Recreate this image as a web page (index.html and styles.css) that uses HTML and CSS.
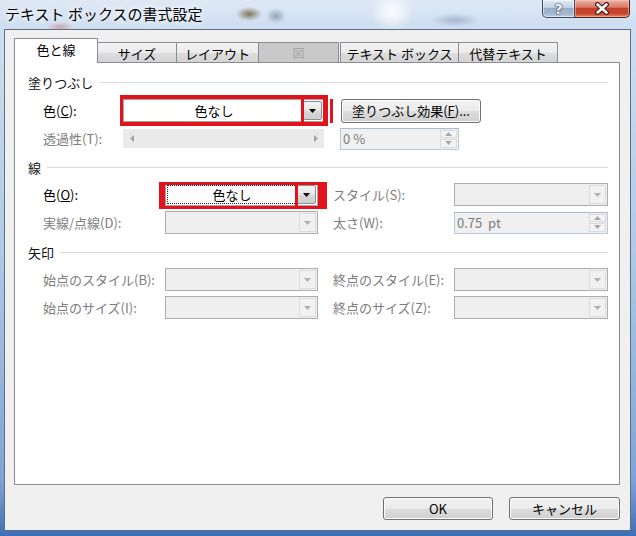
FILE: index.html
```html
<!DOCTYPE html>
<html lang="ja">
<head>
<meta charset="utf-8">
<title>テキスト ボックスの書式設定</title>
<link rel="stylesheet" href="styles.css">
</head>
<body>
<div class="window">
  <header class="titlebar">
    <div class="title">テキスト ボックスの書式設定</div>
    <div class="caption-buttons">
      <div class="cap-btn help"><span>?</span></div>
      <div class="cap-btn close">
        <svg width="16" height="13" viewBox="0 0 16 13"><path d="M3.5 2.5L12.5 10.5M12.5 2.5L3.5 10.5" stroke="#4a1c14" stroke-width="5" stroke-linecap="round"/><path d="M3.5 2.5L12.5 10.5M12.5 2.5L3.5 10.5" stroke="#fff" stroke-width="2.6" stroke-linecap="round"/></svg>
      </div>
    </div>
  </header>
  <div class="client">
    <nav class="tabs">
      <div class="tab active t1">色と線</div>
      <div class="tab t2">サイズ</div>
      <div class="tab t3">レイアウト</div>
      <div class="tab disabled t4">図</div>
      <div class="tab t5">テキスト ボックス</div>
      <div class="tab t6">代替テキスト</div>
    </nav>
    <main class="panel">
      <section class="group g1">
        <div class="group-title">塗りつぶし</div>
        <div class="grid grid-fill">
          <div class="lbl">色(<u>C</u>):</div>
          <div class="combo">
            <div class="combo-field">色なし</div>
            <div class="combo-btn"><svg width="7" height="4" viewBox="0 0 7 4"><path d="M0 0H7L3.5 4Z" fill="#000"/></svg></div>
            <span class="mark m1-outer"></span>
            <span class="mark m1-btn"></span>
            <span class="mark m1-line"></span>
          </div>
          <div class="btn btn-effect">塗りつぶし効果(<u>F</u>)...</div>

          <div class="lbl dis">透過性(T):</div>
          <div class="slider">
            <span class="sl-arrow"><svg width="4" height="7" viewBox="0 0 4 7"><path d="M4 0V7L0 3.5Z" fill="#a2a2a2"/></svg></span>
            <span class="sl-arrow"><svg width="4" height="7" viewBox="0 0 4 7"><path d="M0 0V7L4 3.5Z" fill="#a2a2a2"/></svg></span>
          </div>
          <div class="spin spin-pct">
            <div class="spin-field">0 %</div>
            <div class="spin-btns">
              <span class="sp"><svg width="7" height="4" viewBox="0 0 7 4"><path d="M0 4H7L3.5 0Z" fill="#a8a8a8"/></svg></span>
              <span class="sp"><svg width="7" height="4" viewBox="0 0 7 4"><path d="M0 0H7L3.5 4Z" fill="#a8a8a8"/></svg></span>
            </div>
          </div>
        </div>
      </section>

      <section class="group g2">
        <div class="group-title">線</div>
        <div class="grid grid-two">
          <div class="lbl">色(<u>O</u>):</div>
          <div class="combo">
            <div class="combo-field focus">色なし</div>
            <div class="combo-btn"><svg width="7" height="4" viewBox="0 0 7 4"><path d="M0 0H7L3.5 4Z" fill="#000"/></svg></div>
            <span class="mark m2-outer"></span>
            <span class="mark m2-btn"></span>
          </div>
          <div class="lbl dis lbl2">スタイル(S):</div>
          <div class="combo dis">
            <div class="combo-field"></div>
            <div class="combo-btn"><svg width="7" height="4" viewBox="0 0 7 4"><path d="M0 0H7L3.5 4Z" fill="#b0b0b0"/></svg></div>
          </div>

          <div class="lbl dis">実線/点線(D):</div>
          <div class="combo dis">
            <div class="combo-field"></div>
            <div class="combo-btn"><svg width="7" height="4" viewBox="0 0 7 4"><path d="M0 0H7L3.5 4Z" fill="#b0b0b0"/></svg></div>
          </div>
          <div class="lbl dis lbl2">太さ(W):</div>
          <div class="spin">
            <div class="spin-field">0.75&nbsp; pt</div>
            <div class="spin-btns">
              <span class="sp"><svg width="7" height="4" viewBox="0 0 7 4"><path d="M0 4H7L3.5 0Z" fill="#a8a8a8"/></svg></span>
              <span class="sp"><svg width="7" height="4" viewBox="0 0 7 4"><path d="M0 0H7L3.5 4Z" fill="#a8a8a8"/></svg></span>
            </div>
          </div>
        </div>
      </section>

      <section class="group g3">
        <div class="group-title">矢印</div>
        <div class="grid grid-two">
          <div class="lbl dis">始点のスタイル(B):</div>
          <div class="combo dis">
            <div class="combo-field"></div>
            <div class="combo-btn"><svg width="7" height="4" viewBox="0 0 7 4"><path d="M0 0H7L3.5 4Z" fill="#b0b0b0"/></svg></div>
          </div>
          <div class="lbl dis lbl2">終点のスタイル(E):</div>
          <div class="combo dis">
            <div class="combo-field"></div>
            <div class="combo-btn"><svg width="7" height="4" viewBox="0 0 7 4"><path d="M0 0H7L3.5 4Z" fill="#b0b0b0"/></svg></div>
          </div>

          <div class="lbl dis">始点のサイズ(I):</div>
          <div class="combo dis">
            <div class="combo-field"></div>
            <div class="combo-btn"><svg width="7" height="4" viewBox="0 0 7 4"><path d="M0 0H7L3.5 4Z" fill="#b0b0b0"/></svg></div>
          </div>
          <div class="lbl dis lbl2">終点のサイズ(Z):</div>
          <div class="combo dis">
            <div class="combo-field"></div>
            <div class="combo-btn"><svg width="7" height="4" viewBox="0 0 7 4"><path d="M0 0H7L3.5 4Z" fill="#b0b0b0"/></svg></div>
          </div>
        </div>
      </section>
    </main>
    <footer class="footer">
      <div class="btn btn-ok">OK</div>
      <div class="btn btn-cancel">キャンセル</div>
    </footer>
  </div>
</div>
</body>
</html>
```

FILE: styles.css
```css
* { box-sizing: border-box; margin: 0; padding: 0; }
html, body { width: 636px; height: 536px; overflow: hidden; }
body {
  font-family: "Noto Sans CJK JP", "Noto Sans", sans-serif;
  font-size: 13px;
  color: #000;
  background:
    radial-gradient(ellipse 13px 7px at 249px 14px, rgba(105, 80, 40, .75), rgba(105, 80, 40, 0)),
    radial-gradient(ellipse 10px 8px at 276px 16px, rgba(100, 115, 130, .55), rgba(100, 115, 130, 0)),
    radial-gradient(ellipse 22px 20px at 392px 12px, rgba(255, 255, 255, .95), rgba(255, 255, 255, 0)),
    radial-gradient(ellipse 24px 7px at 455px 20px, rgba(80, 105, 140, .35), rgba(80, 105, 140, 0)),
    radial-gradient(ellipse 14px 5px at 60px 27px, rgba(210, 90, 100, .45), rgba(210, 90, 100, 0)),
    linear-gradient(180deg, #dfe9f5 0px, #cfdff1 24px, #aec8e6 260px, #7fa4d4 480px, #3e6fb5 536px);
}

.window {
  height: 536px;
  display: flex;
  flex-direction: column;
  padding: 0 5px 5px 4px;
}

/* title bar */
.titlebar {
  height: 29px;
  flex: none;
  display: flex;
  justify-content: space-between;
  align-items: flex-start;
}
.title {
  font-size: 15px;
  line-height: 20px;
  padding: 4px 0 0 1px;
  color: #000;
  text-shadow: 0 0 6px #fff, 0 0 10px rgba(255, 255, 255, .9);
}
.caption-buttons { display: flex; margin-right: 1px; }
.cap-btn {
  height: 18px;
  display: flex;
  align-items: center;
  justify-content: center;
  border: 1px solid #3d4d62;
  border-top: none;
}
.help {
  width: 33px;
  border-radius: 0 0 0 5px;
  background: linear-gradient(180deg, #e3ebf4 0%, #c2d1e3 45%, #98adc8 50%, #a7bad2 85%, #c4d3e4 100%);
  box-shadow: inset 0 0 0 1px rgba(255, 255, 255, .45);
}
.help span {
  font-family: "DejaVu Sans", sans-serif;
  font-weight: bold;
  font-size: 14px;
  line-height: 1;
  color: #f4f7fb;
  text-shadow: 0 0 1px #34465e, 0 0 1px #34465e, 0 0 2px #34465e;
}
.close {
  width: 55px;
  border-left: none;
  border-color: #4a1d17;
  border-radius: 0 0 5px 0;
  background: linear-gradient(180deg, #eab1a4 0%, #d97b66 42%, #c5402a 50%, #c9462c 80%, #e18866 100%);
  box-shadow: inset 0 0 0 1px rgba(255, 220, 210, .45);
}

/* client */
.client {
  flex: 1;
  border: 1px solid #5f6f83;
  background: #f0f0f0;
  padding: 8px 10px 10px 9px;
  display: flex;
  flex-direction: column;
}

/* tabs */
.tabs {
  height: 24px;
  display: flex;
  align-items: flex-end;
  position: relative;
  z-index: 1;
}
.tab {
  height: 20px;
  border: 1px solid #898c95;
  border-bottom: none;
  background: linear-gradient(180deg, #f3f3f3 0%, #ebebeb 50%, #dedede 51%, #d4d4d4 100%);
  display: flex;
  align-items: center;
  justify-content: center;
  margin-left: -1px;
  font-size: 13px;
  line-height: 1;
  padding-top: 1px;
}
.tab.active {
  height: 25px;
  margin-bottom: -1px;
  background: #fff;
  padding: 0 0 3px 0;
}
.t1 { width: 84px; margin-left: 0; }
.t2 { width: 80px; }
.t3 { width: 83px; }
.t4 { width: 81px; }
.t5 { width: 119px; margin-left: 1px; }
.t6 { width: 100px; }
.tab.disabled {
  background: #c9c9c9;
  color: #a4a4a4;
  font-size: 12px;
}

/* panel */
.panel {
  height: 423px;
  flex: none;
  border: 1px solid #898c95;
  background: #fff;
  padding: 10px 11px 0 13px;
}
.group-title {
  height: 18px;
  display: flex;
  align-items: center;
  gap: 6px;
  line-height: 1;
  color: #111;
}
.group-title::after {
  content: "";
  flex: 1;
  height: 1px;
  background: #d5dde4;
}
.g2 { margin-top: 8px; }
.g3 { margin-top: 9px; }

.grid {
  display: grid;
  grid-auto-rows: 23px;
  row-gap: 5px;
  padding-left: 15px;
  margin-top: 7px;
  align-items: center;
}
.g1 .grid { margin-top: 8px; }
.grid-fill { grid-template-columns: 63px 201px 140px; column-gap: 17px; }
.grid-two { grid-template-columns: 122px 153px 136px 154px; }

.lbl { line-height: 1; white-space: nowrap; }
.lbl2 { padding-left: 15px; }
.dis { color: #7d7d7d; }
u { text-underline-offset: 1px; }

/* combos */
.combo {
  position: relative;
  height: 23px;
  display: flex;
  border: 1px solid #a5a5a5;
  background: #fff;
  padding: 1px;
}
.combo-field {
  flex: 1;
  display: flex;
  align-items: center;
  justify-content: center;
  line-height: 1;
}
.combo-field.focus { border: 1px dotted #222; }
.combo-btn {
  width: 19px;
  border: 1px solid #8e8f8f;
  border-radius: 2px;
  background: linear-gradient(180deg, #f4f4f4 0%, #e6e6e6 50%, #d6d6d6 51%, #cfcfcf 100%);
  display: flex;
  align-items: center;
  justify-content: center;
}
.combo.dis {
  border-color: #adadad;
  background: #efefef;
}
.combo.dis .combo-btn {
  width: 17px;
  border-color: #dcdcdc;
  border-radius: 0;
  background: #f1f1f1;
}

/* red annotation marks */
.mark { position: absolute; border: 0 solid #e1141e; pointer-events: none; }
.m1-outer { left: -4px; top: -5px; width: 208px; height: 31px; border-width: 4px 3px; }
.m1-btn { left: 177px; top: -5px; width: 27px; height: 31px; border-width: 4px 5px 4px 3px; }
.m1-line { left: 206px; top: -1px; width: 3px; height: 24px; border-width: 0 0 0 3px; }
.m2-outer { left: -7px; top: -2px; width: 168px; height: 27px; border-width: 3px 3px 3px 6px; }
.m2-btn { left: 129px; top: -2px; width: 32px; height: 27px; border-width: 3px 9px 3px 3px; }

/* button */
.btn {
  height: 23px;
  border: 1px solid #707070;
  border-radius: 3px;
  background: linear-gradient(180deg, #f2f2f2 0%, #ebebeb 50%, #dddddd 51%, #cfcfcf 100%);
  box-shadow: inset 0 0 0 1px #fcfcfc;
  display: flex;
  align-items: center;
  justify-content: center;
  line-height: 1;
}
.btn-effect { height: 24px; width: 140px; }

/* slider */
.slider {
  height: 19px;
  background: #eaeaea;
  display: flex;
  justify-content: space-between;
  align-items: center;
}
.sl-arrow { width: 17px; display: flex; justify-content: center; }

/* spinner */
.spin {
  height: 22px;
  display: flex;
  border: 1px solid #b9c9dc;
  border-top-color: #a9b9cf;
  background: #f0f0f0;
}
.spin-pct { width: 119px; margin-left: -1px; }
.spin-field {
  flex: 1;
  display: flex;
  align-items: center;
  padding-left: 2px;
  color: #7d7d7d;
  line-height: 1;
}
.spin-btns {
  width: 19px;
  display: flex;
  flex-direction: column;
  padding: 1px;
  gap: 1px;
}
.sp {
  flex: 1;
  border: 1px solid #dadada;
  background: #f3f3f3;
  display: flex;
  align-items: center;
  justify-content: center;
}

/* footer */
.footer {
  margin-top: 12px;
  display: flex;
  justify-content: flex-end;
  gap: 16px;
}
.btn-ok { width: 110px; }
.btn-cancel { width: 111px; }
```
